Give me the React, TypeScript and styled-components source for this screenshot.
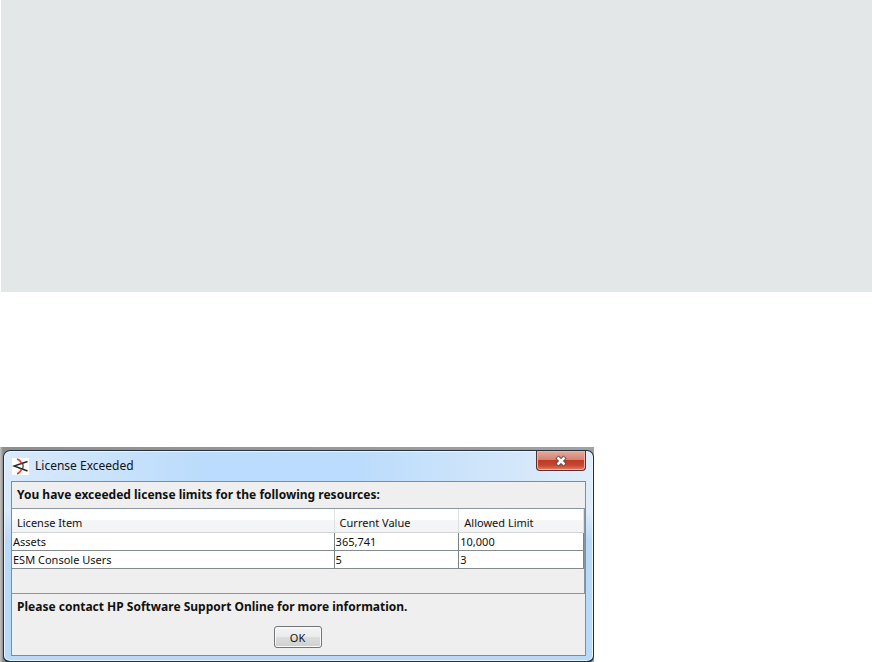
import React from "react";
import styled, { createGlobalStyle } from "styled-components";

const GlobalStyle = createGlobalStyle`
  * { box-sizing: border-box; }
  body {
    margin: 0;
    background: #fff;
    color: #111;
    font-family: "Noto Sans", "Open Sans", sans-serif;
    font-size: 12px;
    line-height: 16px;
  }
`;

const Page = styled.main`
  display: flex;
  flex-direction: column;
  gap: 155px;
`;

const Banner = styled.div`
  height: 292px;
  margin-left: 1px;
  background: #e3e7e8;
`;

const Backdrop = styled.div`
  width: 100%;
  max-width: 594px;
  padding: 3px 0 0 3px;
  background: linear-gradient(90deg, #c4c4c4, #8e8e8e 3px, #a2a2a2);
`;

const Dialog = styled.section`
  display: flex;
  flex-direction: column;
  padding: 0 7px 5px;
  border: 1px solid #22303c;
  border-width: 1px 1px 2px;
  border-radius: 7px;
  background:
    linear-gradient(180deg, transparent 60px, #b9d9f8 90px),
    linear-gradient(90deg, #d9eafb, #bbdcfc 200px, #bbdcfc 60%, #e0edf9);
  box-shadow: inset 0 0 0 1px #e8f4ff;
`;

const TitleBar = styled.header`
  display: flex;
  align-items: flex-start;
  height: 30px;
`;

const Logo = styled.svg`
  width: 17px;
  height: 17px;
  margin: 7px 6px 0 1px;
  background: #fff;
`;

const Title = styled.h1`
  flex: 1;
  margin: 7px 0 0;
  font-size: 12px;
  font-weight: 400;
  line-height: 16px;
`;

const CloseButton = styled.button`
  display: flex;
  align-items: center;
  justify-content: center;
  width: 50px;
  height: 20px;
  padding: 0;
  border: 1px solid #5b2a2c;
  border-top: 0;
  border-radius: 0 0 4px 4px;
  background: linear-gradient(180deg, #e5aa9c, #d68372 45%, #bd3b26 50%, #c8452e 75%, #dc8268);
  box-shadow: inset 0 0 0 1px #eab5a8;
`;

const Panel = styled.div`
  border: 1px solid #7f8d9b;
  background: #efefef;
`;

const Message = styled.p`
  margin: 0;
  padding: 5px;
  font-weight: 700;
`;

const TableArea = styled.div`
  padding-bottom: 24px;
  border: 1px solid #8a97a2;
  border-width: 1px 1px 1px 0;
`;

const Table = styled.table`
  width: 100%;
  table-layout: fixed;
  border-collapse: separate;
  border-spacing: 0;
  background: #fff;
  font-size: 11px;
`;

const HeadCell = styled.th<{ $width?: string }>`
  width: ${(p) => p.$width ?? "auto"};
  height: 24px;
  padding: 5px 5px 1px;
  border-right: 1px solid #dfe1e4;
  border-bottom: 1px solid #d5d5d5;
  background: linear-gradient(180deg, #fff 45%, #f5f6f7 50%, #f2f3f4);
  font-weight: 400;
  text-align: left;
`;

const Cell = styled.td`
  height: 18px;
  padding: 1px 1px 0;
  border-right: 1px solid #7d8285;
  border-bottom: 1px solid #858a8d;
  line-height: 16px;
`;

const Actions = styled.div`
  display: flex;
  justify-content: center;
  padding: 6px 2px 7px 0;
`;

const OkButton = styled.button`
  width: 48px;
  height: 22px;
  padding: 0;
  border: 1px solid #70757a;
  border-radius: 3px;
  background: linear-gradient(180deg, #f4f4f4, #ebebeb 48%, #dddddd 52%, #cfcfcf);
  box-shadow: inset 0 0 0 1px #fafafa;
  color: #111;
  font-family: inherit;
  font-size: 11px;
`;

const columns = [
  { label: "License Item", width: "56.4%" },
  { label: "Current Value", width: "21.8%" },
  { label: "Allowed Limit" },
];

const rows = [
  ["Assets", "365,741", "10,000"],
  ["ESM Console Users", "5", "3"],
];

export default function App() {
  return (
    <Page>
      <GlobalStyle />
      <Banner />
      <Backdrop>
        <Dialog role="dialog" aria-labelledby="dialog-title">
          <TitleBar>
            <Logo viewBox="0 0 17 17" aria-hidden="true">
              <path d="M15.500 3.500 L2 8 L15.500 13" fill="none" stroke="#252525" strokeWidth="1.500" />
              <path d="M10.500 5 Q12 8.500 10.500 11.500" fill="none" stroke="#333" strokeWidth="1.200" />
              <path d="M5 1 Q8.500 2 9.500 5.500 M9.500 11 Q8.500 14.500 5 16" fill="none" stroke="#df4038" strokeWidth="1.600" />
            </Logo>
            <Title id="dialog-title">License Exceeded</Title>
            <CloseButton type="button" aria-label="Close">
              <svg width="14" height="12" viewBox="0 0 14 12" aria-hidden="true">
                <path d="M3 2 L11 10 M11 2 L3 10" stroke="#62454a" strokeWidth="4.500" />
                <path d="M3.500 2.500 L10.500 9.500 M10.500 2.500 L3.500 9.500" stroke="#fff" strokeWidth="2.500" />
              </svg>
            </CloseButton>
          </TitleBar>
          <Panel>
            <Message>You have exceeded license limits for the following resources:</Message>
            <TableArea>
              <Table>
                <thead>
                  <tr>
                    {columns.map((column) => (
                      <HeadCell key={column.label} scope="col" $width={column.width}>
                        {column.label}
                      </HeadCell>
                    ))}
                  </tr>
                </thead>
                <tbody>
                  {rows.map((row) => (
                    <tr key={row[0]}>
                      {row.map((value) => (
                        <Cell key={value}>{value}</Cell>
                      ))}
                    </tr>
                  ))}
                </tbody>
              </Table>
            </TableArea>
            <Message>Please contact HP Software Support Online for more information.</Message>
            <Actions>
              <OkButton type="button">OK</OkButton>
            </Actions>
          </Panel>
        </Dialog>
      </Backdrop>
    </Page>
  );
}
